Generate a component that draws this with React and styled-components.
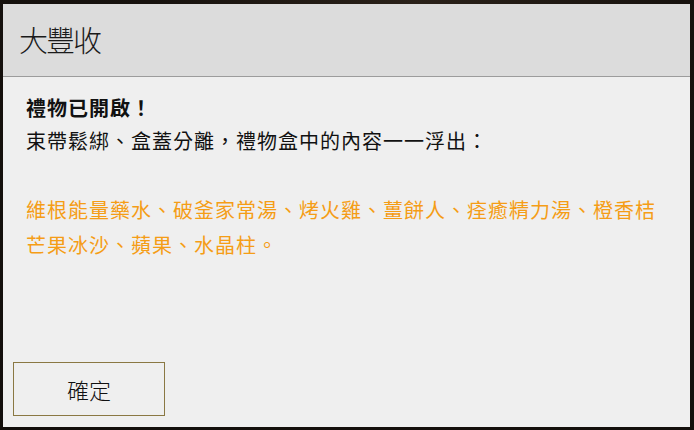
import React from 'react';
import styled, { createGlobalStyle } from 'styled-components';

const GlobalStyle = createGlobalStyle`
  html, body {
    margin: 0;
    padding: 0;
    background: #17120e;
  }
  body {
    font-family: "Noto Sans CJK TC", "Noto Sans", sans-serif;
  }
`;

const Screen = styled.div`
  width: 694px;
  height: 430px;
  box-sizing: border-box;
  padding: 4px 4px 3px 3px;
  background: radial-gradient(ellipse at 60% 0%, #2a2119 0%, #17120e 45%, #120e0b 100%);
`;

const Dialog = styled.div`
  height: 100%;
  display: flex;
  flex-direction: column;
  background: #efefef;
`;

const Header = styled.div`
  height: 73px;
  box-sizing: border-box;
  display: flex;
  align-items: center;
  padding: 0 0 2px 16px;
  background: #dcdcdc;
  border-bottom: 1px solid #9c9c9c;
`;

const Title = styled.h1`
  margin: 0;
  font-size: 29px;
  font-weight: 300;
  color: #1a1a1a;
  letter-spacing: -2px;
`;

const Body = styled.div`
  flex: 1;
  padding: 14px 30px 0 23px;
  font-size: 20px;
  line-height: 33px;
  letter-spacing: 1px;
  color: #111;
`;

const Line = styled.p`
  margin: 0;
  font-weight: ${({ bold }) => (bold ? 700 : 400)};
  color: ${({ highlight }) => (highlight ? '#f59d16' : '#111')};
  margin-top: ${({ gap }) => (gap ? '35px' : '0')};
  line-height: ${({ highlight }) => (highlight ? '35px' : '33px')};
`;

const Footer = styled.div`
  padding: 0 0 11px 10px;
`;

const ConfirmButton = styled.button`
  width: 152px;
  height: 54px;
  background: transparent;
  border: 1px solid #8a7843;
  font-family: "Noto Sans CJK TC", "Noto Sans", sans-serif;
  font-size: 22px;
  font-weight: 300;
  color: #111;
  padding: 0;
  cursor: pointer;
`;

const App = () => (
  <>
    <GlobalStyle />
    <Screen>
      <Dialog>
        <Header>
          <Title>大豐收</Title>
        </Header>
        <Body>
          <Line bold>禮物已開啟！</Line>
          <Line>束帶鬆綁、盒蓋分離，禮物盒中的內容一一浮出：</Line>
          <Line highlight gap>
            維根能量藥水、破釜家常湯、烤火雞、薑餅人、痊癒精力湯、橙香桔芒果冰沙、蘋果、水晶柱。
          </Line>
        </Body>
        <Footer>
          <ConfirmButton>確定</ConfirmButton>
        </Footer>
      </Dialog>
    </Screen>
  </>
);

export default App;
